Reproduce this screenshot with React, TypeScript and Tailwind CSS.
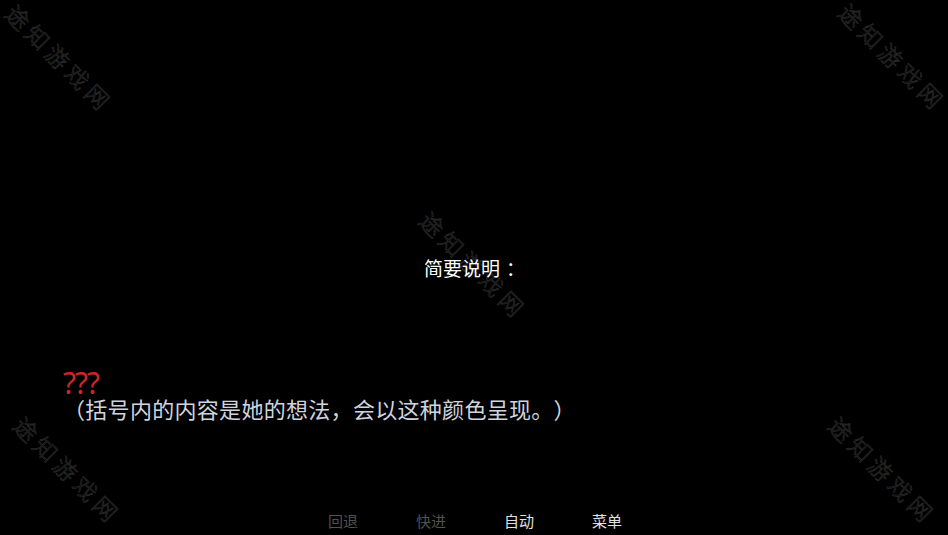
import React from "react";

const font = "font-['Noto_Sans_CJK_SC',sans-serif]";

// watermark centres, taken from the screenshot
const marks = [
  { cx: 60, cy: 58 },
  { cx: 893, cy: 57 },
  { cx: 474, cy: 265 },
  { cx: 68, cy: 470 },
  { cx: 883, cy: 470 },
];

function Watermark({ cx, cy }: { cx: number; cy: number }) {
  return (
    <div
      className="absolute w-[140px] h-[30px] flex items-center justify-center rotate-45 text-[23px] leading-[30px] tracking-[5px] font-light text-black [-webkit-text-stroke:0.7px_#2a2a2a] pointer-events-none select-none whitespace-nowrap"
      style={{ left: cx - 70, top: cy - 15 }}
    >
      途知游戏网
    </div>
  );
}

export default function App() {
  return (
    <div
      lang="zh-CN"
      className={`relative w-[948px] h-[535px] bg-black overflow-hidden [text-spacing-trim:space-all] ${font}`}
    >
      {marks.map((m, i) => (
        <Watermark key={i} cx={m.cx} cy={m.cy} />
      ))}

      <div className="relative flex flex-col h-full">
        {/* title */}
        <div className="pt-[255px] pl-[424px] text-[19px] leading-[26px] text-white">
          简要说明<span className="ml-[6px]">：</span>
        </div>

        {/* dialogue */}
        <div className="mt-[86px] pl-[63px]">
          <div className="text-[30px] leading-[32px] text-[#c8282a] tracking-[-1px] font-['Liberation_Sans_Narrow','Noto_Sans',sans-serif]">
            ???
          </div>
          <div className="-mt-[4px] text-[22px] leading-[26px] tracking-[0.3px] text-[#d0d4df]">
            （括号内的内容是她的想法，会以这种颜色呈现。）
          </div>
        </div>

        {/* quick menu */}
        <div className="mt-auto pb-[2px] flex justify-center gap-[58px] pl-[2px] text-[15px] leading-[24px]">
          <span className="text-[#525252]">回退</span>
          <span className="text-[#525252]">快进</span>
          <span className="text-[#e0e0e0]">自动</span>
          <span className="text-[#e0e0e0]">菜单</span>
        </div>
      </div>
    </div>
  );
}
